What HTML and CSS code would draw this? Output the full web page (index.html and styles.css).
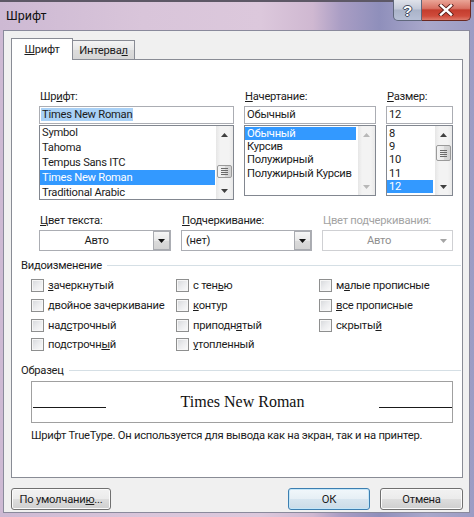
FILE: index.html
```html
<!DOCTYPE html>
<html lang="ru">
<head>
<meta charset="utf-8">
<title>Шрифт</title>
<link rel="stylesheet" href="styles.css">
</head>
<body>
<div class="window">
  <div class="titlebar">
    <span class="title">Шрифт</span>
    <div class="caption">
      <div class="cap-help"><span class="qmark">?</span></div>
      <div class="cap-close">
        <svg width="16" height="12" viewBox="0 0 16 12"><path d="M3 1.5L13 10.5M13 1.5L3 10.5" stroke="#5a1e18" stroke-width="4.2" stroke-linecap="square"/><path d="M3 1.5L13 10.5M13 1.5L3 10.5" stroke="#ffffff" stroke-width="2.4" stroke-linecap="square"/></svg>
      </div>
    </div>
  </div>
  <div class="client">
    <div class="tabs">
      <div class="tab tab-active"><span><u>Ш</u>рифт</span></div>
      <div class="tab"><span>Интерва<u>л</u></span></div>
    </div>
    <div class="panel">
      <div class="font-grid">
        <div class="col">
          <div class="label">Шр<u>и</u>фт:</div>
          <div class="input input-font"><span class="sel-text">Times New Roman</span></div>
          <div class="list list-font">
            <div class="items items-font">
              <div class="item">Symbol</div>
              <div class="item">Tahoma</div>
              <div class="item">Tempus Sans ITC</div>
              <div class="item selected">Times New Roman</div>
              <div class="item">Traditional Arabic</div>
            </div>
            <div class="sb">
              <div class="sb-btn"><svg width="7" height="4" viewBox="0 0 7 4"><path d="M0 4L3.5 0L7 4Z"/></svg></div>
              <div class="sb-track"><div class="sb-thumb thumb-font"><svg width="7" height="7" viewBox="0 0 7 7"><path d="M0 0.5H7M0 2.5H7M0 4.5H7M0 6.5H7" stroke="#6b6b6b" stroke-width="1"/></svg></div></div>
              <div class="sb-btn"><svg width="7" height="4" viewBox="0 0 7 4"><path d="M0 0L3.5 4L7 0Z"/></svg></div>
            </div>
          </div>
        </div>
        <div class="col">
          <div class="label"><u>Н</u>ачертание:</div>
          <div class="input">Обычный</div>
          <div class="list list-small">
            <div class="items">
              <div class="item item-s selected">Обычный</div>
              <div class="item item-s">Курсив</div>
              <div class="item item-s">Полужирный</div>
              <div class="item item-s">Полужирный Курсив</div>
            </div>
            <div class="sb sb-disabled">
              <div class="sb-btn"><svg width="7" height="4" viewBox="0 0 7 4"><path d="M0 4L3.5 0L7 4Z"/></svg></div>
              <div class="sb-track"></div>
              <div class="sb-btn"><svg width="7" height="4" viewBox="0 0 7 4"><path d="M0 0L3.5 4L7 0Z"/></svg></div>
            </div>
          </div>
        </div>
        <div class="col">
          <div class="label"><u>Р</u>азмер:</div>
          <div class="input">12</div>
          <div class="list list-small">
            <div class="items">
              <div class="item item-s">8</div>
              <div class="item item-s">9</div>
              <div class="item item-s">10</div>
              <div class="item item-s">11</div>
              <div class="item item-s selected">12</div>
            </div>
            <div class="sb">
              <div class="sb-btn"><svg width="7" height="4" viewBox="0 0 7 4"><path d="M0 4L3.5 0L7 4Z"/></svg></div>
              <div class="sb-track"><div class="sb-thumb thumb-size"><svg width="7" height="7" viewBox="0 0 7 7"><path d="M0 0.5H7M0 2.5H7M0 4.5H7M0 6.5H7" stroke="#6b6b6b" stroke-width="1"/></svg></div></div>
              <div class="sb-btn"><svg width="7" height="4" viewBox="0 0 7 4"><path d="M0 0L3.5 4L7 0Z"/></svg></div>
            </div>
          </div>
        </div>
      </div>

      <div class="combo-grid">
        <div class="col">
          <div class="label"><u>Ц</u>вет текста:</div>
          <div class="combo">
            <div class="value center">Авто</div>
            <div class="dd"><svg width="7" height="4" viewBox="0 0 7 4"><path d="M0 0L3.5 4L7 0Z"/></svg></div>
          </div>
        </div>
        <div class="col">
          <div class="label"><u>П</u>одчеркивание:</div>
          <div class="combo">
            <div class="value">(нет)</div>
            <div class="dd"><svg width="7" height="4" viewBox="0 0 7 4"><path d="M0 0L3.5 4L7 0Z"/></svg></div>
          </div>
        </div>
        <div class="col">
          <div class="label disabled">Цвет подчеркивания:</div>
          <div class="combo combo-disabled">
            <div class="value center">Авто</div>
            <div class="dd"><svg width="7" height="4" viewBox="0 0 7 4"><path d="M0 0L3.5 4L7 0Z"/></svg></div>
          </div>
        </div>
      </div>

      <div class="group-head group-effects"><span>Видоизменение</span><i class="rule"></i></div>
      <div class="checks">
        <div class="cb"><span class="box"></span><span><u>з</u>ачеркнутый</span></div>
        <div class="cb"><span class="box"></span><span>с тен<u>ь</u>ю</span></div>
        <div class="cb"><span class="box"></span><span>м<u>а</u>лые прописные</span></div>
        <div class="cb"><span class="box"></span><span>двойное зачеркивание</span></div>
        <div class="cb"><span class="box"></span><span><u>к</u>онтур</span></div>
        <div class="cb"><span class="box"></span><span><u>в</u>се прописные</span></div>
        <div class="cb"><span class="box"></span><span>над<u>с</u>трочный</span></div>
        <div class="cb"><span class="box"></span><span>приподн<u>я</u>тый</span></div>
        <div class="cb"><span class="box"></span><span>скрыты<u>й</u></span></div>
        <div class="cb"><span class="box"></span><span>подстрочн<u>ы</u>й</span></div>
        <div class="cb"><span class="box"></span><span><u>у</u>топленный</span></div>
      </div>

      <div class="group-head group-sample"><span>Образец</span><i class="rule"></i></div>
      <div class="preview">
        <span class="base-line"></span>
        <span class="preview-text">Times New Roman</span>
        <span class="base-line"></span>
      </div>
      <div class="desc">Шрифт TrueType. Он используется для вывода как на экран, так и на принтер.</div>
    </div>

    <div class="buttons">
      <div class="btn btn-default-set">По умолчани<u>ю</u>...</div>
      <div class="btn btn-ok">ОК</div>
      <div class="btn btn-cancel">Отмена</div>
    </div>
  </div>
</div>
</body>
</html>
```

FILE: styles.css
```css
* { box-sizing: border-box; }
html, body { margin: 0; padding: 0; }
body {
  width: 474px;
  height: 517px;
  overflow: hidden;
  font-family: Roboto, "Noto Sans", sans-serif;
  font-size: 11.2px;
  letter-spacing: -0.25px;
  color: #1c1c1c;
}
u { text-decoration: underline; text-underline-offset: 1px; }

.window {
  width: 474px;
  height: 517px;
  display: flex;
  flex-direction: column;
  background: linear-gradient(90deg, #cdb9d3 0%, #d9c5da 30%, #dcc8dc 55%, #cfb8d1 66%, #a99dc4 72%, #8f8fbb 80%, #a9a8cb 90%, #9c9cc4 100%);
  box-shadow: inset 0 2px 0 #5d5866;
}

.titlebar {
  height: 30px;
  display: flex;
  align-items: center;
  padding-left: 6px;
  flex: none;
}
.title { font-size: 12.5px; letter-spacing: 0; color: #111; }
.caption {
  margin-left: auto;
  margin-right: 3px;
  align-self: flex-start;
  display: flex;
  height: 21px;
}
.cap-help {
  width: 29px;
  height: 21px;
  border: 1px solid #5f677c;
  border-top: none;
  border-radius: 0 0 0 5px;
  background: linear-gradient(#dfe2ea, #c3c9d8 45%, #aab3c8 50%, #b7c0d6 100%);
  display: flex;
  align-items: center;
  justify-content: center;
}
.qmark {
  font-family: "Liberation Sans", sans-serif;
  font-weight: bold;
  font-size: 15px;
  line-height: 15px;
  letter-spacing: 0;
  color: #fff;
  text-shadow: 0 0 1px #2c3447, 1px 0 0 #4a5268, -1px 0 0 #4a5268, 0 1px 0 #4a5268, 0 -1px 0 #4a5268;
}
.cap-close {
  width: 49px;
  height: 21px;
  border: 1px solid #6b2820;
  border-top: none;
  border-left: none;
  border-radius: 0 0 5px 0;
  background: linear-gradient(#eaa597, #d87163 42%, #c43d2e 50%, #cf4b3b 80%, #de7a6a 100%);
  display: flex;
  align-items: center;
  justify-content: center;
}

.client {
  flex: 1;
  margin: 0 4px 4px 3px;
  border: 1px solid #8a8a9c;
  background: #f0f0f0;
  padding: 7px 6px 0 7px;
  display: flex;
  flex-direction: column;
}

.tabs {
  display: flex;
  align-items: flex-end;
  height: 22px;
  margin-bottom: -1px;
  position: relative;
  z-index: 1;
}
.tab {
  width: 62px;
  height: 19px;
  margin-bottom: 1px;
  border: 1px solid #898c95;
  border-bottom: none;
  border-left: none;
  background: linear-gradient(#f4f4f4, #e6e6e6 50%, #dcdcdc 51%, #d6d6d6);
  display: flex;
  align-items: center;
  justify-content: center;
  padding-top: 1px;
}
.tab-active {
  height: 22px;
  margin-bottom: 0;
  border-left: 1px solid #898c95;
  background: #fff;
  padding-top: 0;
  padding-bottom: 1px;
}

.panel {
  height: 419px;
  border: 1px solid #898c95;
  background: #fff;
  padding: 29px 1px 0 9px;
  flex: none;
}

.font-grid {
  margin-left: 18px;
  display: grid;
  grid-template-columns: 195px 132px 67px;
  column-gap: 10px;
  align-items: start;
}
.label {
  height: 15px;
  line-height: 15px;
  padding-left: 1px;
  margin-bottom: 2px;
  white-space: nowrap;
}
.label.disabled { color: #a3a3a3; }
.input {
  height: 18px;
  border: 1px solid #abadb3;
  line-height: 16px;
  padding-left: 2px;
  white-space: nowrap;
}
.input-font { padding-left: 1px; }
.sel-text {
  background: #a9d1f6;
  padding: 0 1px;
  display: inline-block;
  line-height: 13px;
}
.list {
  margin-top: 1px;
  border: 1px solid #828790;
  display: flex;
  overflow: hidden;
}
.list-font { height: 75px; }
.list-small { height: 71px; }
.items {
  flex: 1;
  overflow: hidden;
  min-width: 0;
}
.items-font { margin-top: -1px; }
.item {
  height: 15px;
  line-height: 15px;
  padding-left: 2px;
  white-space: nowrap;
  margin-right: 1px;
}
.items-font .item { line-height: 12px; padding-top: 1.5px; }
.item-s {
  height: 13.4px;
  line-height: 13.4px;
  margin-right: 2px;
}
.list-small .items { padding-top: 0.5px; }
.item.selected { background: #3399ff; color: #fff; }

.sb {
  width: 17px;
  flex: none;
  display: flex;
  flex-direction: column;
  background: linear-gradient(90deg, #e6e6e6, #f3f3f3 25%, #f3f3f3 75%, #e9e9e9);
}
.sb-btn {
  height: 17px;
  flex: none;
  display: flex;
  align-items: center;
  justify-content: center;
}
.sb-btn path { fill: #404040; }
.sb-disabled .sb-btn path { fill: #b8b8b8; }
.sb-track { flex: 1; padding: 0 1px; }
.sb-thumb {
  border: 1px solid #9a9a9a;
  border-radius: 2px;
  background: linear-gradient(90deg, #f4f4f4, #e9e9e9 50%, #d9d9d9 51%, #d2d2d2);
  display: flex;
  align-items: center;
  justify-content: center;
}
.thumb-font { margin-top: 22px; height: 13px; }
.thumb-size { margin-top: 2px; height: 16px; }

.combo-grid {
  margin-left: 18px;
  margin-top: 13px;
  display: grid;
  grid-template-columns: 132px 131px 131px;
  column-gap: 10px;
}
.combo {
  height: 21px;
  border: 1px solid #abadb3;
  display: flex;
}
.combo .value {
  flex: 1;
  line-height: 19px;
  padding-left: 4px;
  white-space: nowrap;
}
.combo .value.center { text-align: center; padding-left: 0; }
.combo .dd {
  width: 17px;
  flex: none;
  border: 1px solid #a9abb0;
  background: linear-gradient(#f6f6f6, #e8e8e8 50%, #dbdbdb 51%, #d3d3d3);
  display: flex;
  align-items: center;
  justify-content: center;
}
.combo .dd path { fill: #111; }
.combo-disabled { border-color: #cfd0d3; color: #8f8f8f; }
.combo-disabled .dd { border-color: transparent; background: none; }
.combo-disabled .dd path { fill: #a5a5a5; }

.group-head {
  height: 15px;
  display: flex;
  align-items: center;
  line-height: 15px;
  white-space: nowrap;
}
.group-head .rule {
  flex: 1;
  height: 1px;
  background: #d5dfe5;
  margin-left: 5px;
}
.group-effects { margin-top: 7px; }
.group-sample { margin-top: 8px; }

.checks {
  margin-top: 3px;
  padding-left: 10px;
  display: grid;
  grid-template-columns: 145px 143px 1fr;
  grid-auto-rows: 19.7px;
}
.cb {
  display: flex;
  align-items: center;
  gap: 4px;
  white-space: nowrap;
}
.box {
  width: 13px;
  height: 13px;
  flex: none;
  border: 1px solid #8e8f8f;
  background: linear-gradient(135deg, #d5d7da 0%, #ebecee 50%, #fbfbfb 100%);
  box-shadow: inset 0 0 0 1px #f6f6f6;
}

.preview {
  margin-top: 3px;
  margin-left: 10px;
  width: 422px;
  height: 42px;
  border: 1px solid #a0a0a0;
  background: #fff;
  display: grid;
  grid-template-columns: 73px 1fr 73px;
  padding-left: 1px;
}
.base-line {
  height: 26px;
  border-bottom: 1px solid #1a1a1a;
}
.preview-text {
  font-family: "Liberation Serif", serif;
  font-size: 16px;
  letter-spacing: 0;
  line-height: 40px;
  text-align: center;
  color: #111;
}
.desc {
  margin-top: 5px;
  padding-left: 10px;
  line-height: 15px;
  white-space: nowrap;
}

.buttons {
  margin-top: 10px;
  display: flex;
  gap: 10px;
}
.btn {
  height: 22px;
  border: 1px solid #707070;
  border-radius: 3px;
  background: linear-gradient(#f2f2f2 0%, #ebebeb 50%, #dddddd 51%, #cfcfcf 100%);
  box-shadow: inset 0 0 0 1px #fbfbfb;
  display: flex;
  align-items: center;
  justify-content: center;
  white-space: nowrap;
}
.btn-default-set { width: 100px; }
.btn-ok {
  width: 82px;
  margin-left: auto;
  border-color: #3c7fb1;
  background: linear-gradient(#f1f7fb 0%, #e6eff5 50%, #d7e5ef 51%, #cbdbe7 100%);
  box-shadow: inset 0 0 0 1px #c4e6f8;
}
.btn-cancel { width: 83px; }
```
